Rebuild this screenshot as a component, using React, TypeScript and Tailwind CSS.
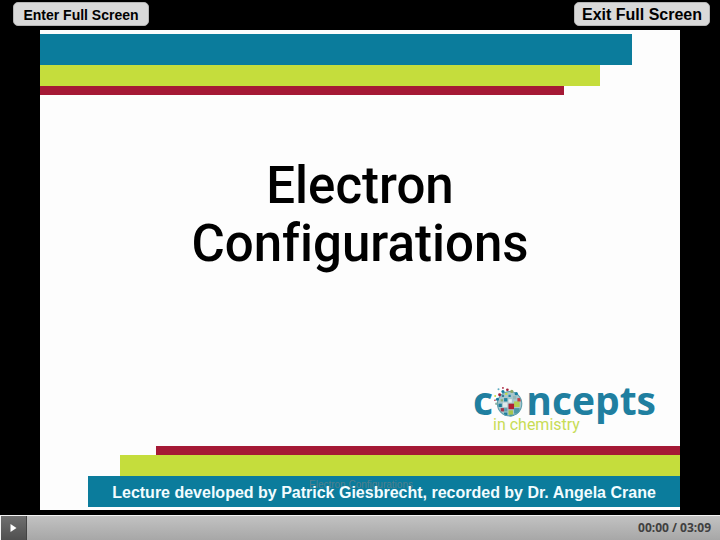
const dots: [number, number, number, string][] = [
  [8, 4, 1.4, "#177f9f"], [12, 2.5, 1.2, "#a51c36"], [16, 4, 1.5, "#8aa86a"], [5, 7, 1.3, "#a51c36"],
  [3, 11, 1.4, "#177f9f"], [2, 15, 1.1, "#8cb3a5"], [20, 6, 1.5, "#177f9f"], [1, 8, 0.9, "#c5dd3d"],
  [4, 2, 0.9, "#5eabc0"], [8, 0.8, 0.8, "#a51c36"], [0.8, 12, 0.7, "#a51c36"],
];

const tiles: [number, number, number, string][] = [
  [7, 7, 2, "#37829a"], [10, 5, 2, "#c5dd3d"], [13, 7, 2, "#1e86a3"], [17, 8, 3, "#94b8b8"],
  [6, 11, 2, "#8cae72"], [9, 10, 3, "#1d839f"], [13, 11, 3, "#e2eeee"], [18, 13, 5, "#b3cf52"],
  [4, 15, 3, "#1a7c98"], [8, 14, 4, "#dfe9ea"], [13, 15, 5, "#b01e33"], [6, 19, 3, "#9e364b"],
  [9, 19, 3, "#5e9fae"], [13, 21, 4, "#a9c64a"], [18, 19, 5, "#4b98a6"], [9, 23, 3, "#1d7d99"],
  [21, 10, 3, "#c63a3f"], [14, 25, 4, "#1d7d99"],
];

function Globe() {
  return (
    <svg className="absolute left-[21px] top-1 h-[30px] w-[29px]" viewBox="0 0 26 27" aria-hidden="true">
      <defs>
        <clipPath id="sphere"><circle cx="14" cy="15" r="11.5" /></clipPath>
      </defs>
      <circle cx="14" cy="15" r="11.5" fill="#a9c6cc" />
      <g clipPath="url(#sphere)">
        {tiles.map(([x, y, s, c]) => <rect key={`${x}-${y}`} x={x} y={y} width={s} height={s} fill={c} />)}
        <circle cx="14" cy="15" r="11" fill="none" stroke="#5b9fae" />
      </g>
      {dots.map(([x, y, r, c]) => <circle key={`${x}-${y}`} cx={x} cy={y} r={r} fill={c} />)}
    </svg>
  );
}

function Logo() {
  return (
    <div className="relative mr-6 h-[54px] w-[183px]">
      <div className="flex justify-between font-['Open_Sans',sans-serif] text-[39px] leading-[34px] font-bold text-[#207fa0]">
        <span>c</span>
        <span>ncepts</span>
      </div>
      <Globe />
      <div className="absolute left-5 top-8 font-[Roboto,sans-serif] text-[16px] leading-5 whitespace-nowrap text-[#c8dc55]">in chemistry</div>
    </div>
  );
}

export default function App() {
  return (
    <div className="flex min-h-screen flex-col bg-black font-['Liberation_Sans',Arial,sans-serif]">
      <header className="flex h-[30px] items-start justify-between pt-0.5 pr-2.5 pl-[13px] font-bold text-black">
        <button type="button" className="h-6 w-[136px] rounded-[5px] border border-[#b5b5b5] bg-[#d9d9d9] pt-0.5 text-[14px] leading-5 whitespace-nowrap">
          Enter Full Screen
        </button>
        <button type="button" className="h-6 w-[136px] rounded-[5px] border border-[#b5b5b5] bg-[#d9d9d9] pt-0.5 text-[16px] leading-5 whitespace-nowrap">
          Exit Full Screen
        </button>
      </header>

      <main className="mx-10 mb-[5px] flex min-h-[480px] flex-1 flex-col bg-[#fdfdfd] pt-1 pb-[3px]">
        <div className="h-[31px] w-[92.5%] bg-[#0b7c9c]" />
        <div className="h-[21px] w-[87.5%] bg-[#c5dd3c]" />
        <div className="h-[9px] w-[81.8%] bg-[#a51935]" />

        <h1 className="mt-[62px] text-center font-[Roboto,sans-serif] text-[51px] leading-[58px] font-medium text-black [font-variant-ligatures:none]">
          Electron
          <br />
          Configurations
        </h1>

        <div className="mt-auto mb-[9px] flex justify-end">
          <Logo />
        </div>

        <div className="h-[9px] w-[81.8%] self-end bg-[#a51935]" />
        <div className="h-[21px] w-[87.5%] self-end bg-[#c5dd3c]" />
        <div className="relative flex h-[31px] w-[92.5%] items-center justify-center self-end bg-[#0b7c9c] pt-0.5 text-[16px] font-bold whitespace-nowrap text-[#f2fcff]">
          <span className="absolute top-0.5 left-[221px] text-[10px] leading-[14px] font-normal text-[#527f8c]">Electron Configurations</span>
          <span className="relative">Lecture developed by Patrick Giesbrecht, recorded by Dr. Angela Crane</span>
        </div>
      </main>

      <footer className="flex h-[25px] items-stretch justify-between border-t border-l border-[#f3f3f3] bg-linear-to-b from-[#c2c2c2] to-[#a7a7a7]">
        <button type="button" aria-label="Play" className="flex w-[26px] items-center justify-center border-r border-[#444] bg-linear-to-b from-[#6f6f6f] to-[#505050]">
          <svg className="h-2 w-[7px]" viewBox="0 0 7 8" aria-hidden="true"><path d="M0.5 0v8L6.5 4z" fill="#fff" /></svg>
        </button>
        <span className="pr-[9px] font-['Open_Sans',sans-serif] text-[12px] leading-6 font-bold text-[#404040]">00:00 / 03:09</span>
      </footer>
    </div>
  );
}
